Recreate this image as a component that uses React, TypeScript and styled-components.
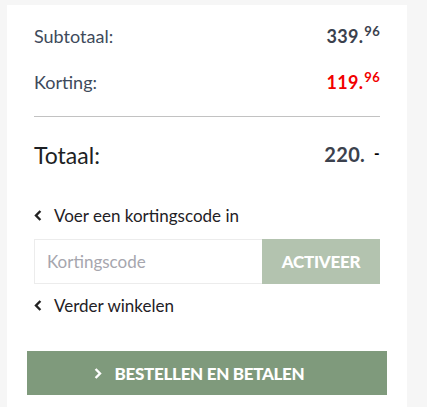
import styled, { createGlobalStyle } from "styled-components";

const GlobalStyle = createGlobalStyle`
  *, *::before, *::after {
    box-sizing: border-box;
  }
  html, body {
    margin: 0;
    padding: 0;
    background: #f6f6f6;
    font-family: Lato, "Open Sans", sans-serif;
    overflow: hidden;
  }
`;

const Page = styled.div`
  padding: 5px 20px 0 7px;
  height: 407px;
`;

const Panel = styled.div`
  background: #fff;
  width: 400px;
  height: 100%;
  padding: 22px 20px 0;
`;

const Summary = styled.div`
  padding: 0 7px;
`;

const Row = styled.div<{ $gap: number }>`
  display: flex;
  justify-content: space-between;
  align-items: flex-start;
  margin-bottom: ${(p) => p.$gap}px;
`;

const Label = styled.span<{ $big?: boolean }>`
  font-size: ${(p) => (p.$big ? "23px" : "18px")};
  color: ${(p) => (p.$big ? "#1d1f24" : "#3e4a5b")};
  line-height: 1;
`;

const Amount = styled.span<{ $red?: boolean; $big?: boolean }>`
  font-weight: 700;
  font-size: ${(p) => (p.$big ? "20px" : "18px")};
  letter-spacing: 0.3px;
  color: ${(p) => (p.$red ? "#f20000" : "#3b414d")};
  line-height: 1;
`;

const Cents = styled.sup<{ $dash?: boolean }>`
  font-size: ${(p) => (p.$dash ? "15px" : "13px")};
  font-weight: ${(p) => (p.$dash ? 900 : 700)};
  line-height: 0;
  vertical-align: ${(p) => (p.$dash ? "3px" : "7px")};
  margin-left: ${(p) => (p.$dash ? "9px" : "1px")};
  color: ${(p) => (p.$dash ? "#000" : "inherit")};
`;

const Divider = styled.hr`
  border: none;
  border-top: 1px solid #c2c2c2;
  margin: 0 0 27px;
`;

const BackLink = styled.a<{ $top: number }>`
  display: flex;
  align-items: center;
  gap: 12px;
  margin-top: ${(p) => p.$top}px;
  font-size: 17px;
  line-height: 1;
  color: #1f2126;
  text-decoration: none;
  cursor: pointer;
`;

const CodeForm = styled.div`
  display: flex;
  height: 45px;
  margin-top: 15px;
`;

const CodeInput = styled.input`
  flex: 1;
  min-width: 0;
  border: 1px solid #ececec;
  border-right: none;
  padding: 0 12px;
  font-family: inherit;
  font-size: 17px;
  color: #333;
  outline: none;
  &::placeholder {
    color: #a6a6ae;
  }
`;

const ActivateButton = styled.button`
  width: 118px;
  border: none;
  background: #b3c3af;
  color: #fff;
  font-family: inherit;
  font-weight: 900;
  font-size: 17px;
  letter-spacing: -0.3px;
`;

const OrderButton = styled.button`
  display: flex;
  align-items: center;
  justify-content: center;
  gap: 13px;
  width: 100%;
  height: 44px;
  margin-top: 37px;
  border: none;
  background: #7f9a7c;
  color: #fff;
  font-family: inherit;
  font-weight: 900;
  font-size: 17px;
  letter-spacing: -0.3px;
  padding-right: 22px;
`;

const Chevron = ({ dir, color }: { dir: "left" | "right"; color: string }) => (
  <svg width={8} height={11} viewBox="0 0 8 11">
    <path
      d={dir === "left" ? "M6.4 1 L2 5.5 L6.4 10" : "M1.6 1 L6 5.5 L1.6 10"}
      fill="none"
      stroke={color}
      strokeWidth={2.4}
    />
  </svg>
);

export default function App() {
  return (
    <>
      <GlobalStyle />
      <Page>
        <Panel>
          <Summary>
            <Row $gap={28}>
              <Label>Subtotaal:</Label>
              <Amount>
                339.<Cents>96</Cents>
              </Amount>
            </Row>
            <Row $gap={25}>
              <Label>Korting:</Label>
              <Amount $red>
                119.<Cents>96</Cents>
              </Amount>
            </Row>
            <Divider />
            <Row $gap={0}>
              <Label $big>Totaal:</Label>
              <Amount $big>
                220.<Cents $dash>-</Cents>
              </Amount>
            </Row>
            <BackLink $top={40}>
              <Chevron dir="left" color="#222" />
              Voer een kortingscode in
            </BackLink>
            <CodeForm>
              <CodeInput placeholder="Kortingscode" />
              <ActivateButton>ACTIVEER</ActivateButton>
            </CodeForm>
            <BackLink $top={13}>
              <Chevron dir="left" color="#222" />
              Verder winkelen
            </BackLink>
          </Summary>
          <OrderButton>
            <Chevron dir="right" color="#fff" />
            BESTELLEN EN BETALEN
          </OrderButton>
        </Panel>
      </Page>
    </>
  );
}
